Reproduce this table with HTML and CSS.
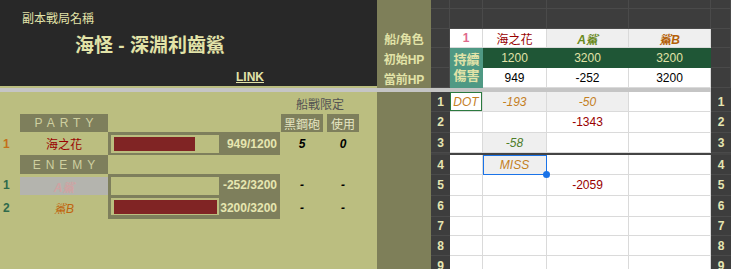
FILE: index.html
```html
<!DOCTYPE html>
<html lang="zh-Hant">
<head>
<meta charset="utf-8">
<title>副本戰局</title>
<link rel="stylesheet" href="styles.css">
</head>
<body>
<div class="sheet">
  <div class="top">
    <div class="title-panel">
      <div class="title-label">副本戰局名稱</div>
      <div class="title-main">海怪 - 深淵利齒鯊</div>
      <div class="title-link">LINK</div>
    </div>
    <div class="label-col">
      <div></div><div></div>
      <div class="lbl">船/角色</div>
      <div class="lbl">初始HP</div>
      <div class="lbl">當前HP</div>
    </div>
    <div class="top-grid">
      <div class="dk"></div><div class="dk"></div><div class="dk"></div><div class="dk"></div><div class="dk"></div><div class="dk"></div>
      <div class="dk"></div><div class="dk"></div><div class="dk"></div><div class="dk"></div><div class="dk"></div><div class="dk"></div>
      <div class="dk"></div>
      <div class="c pink">1</div>
      <div class="c dred">海之花</div>
      <div class="c gray hdr-a">A鯊</div>
      <div class="c gray hdr-b">鯊B</div>
      <div class="dk"></div>
      <div class="dk"></div>
      <div class="teal"><span>持續</span><span>傷害</span></div>
      <div class="c green">1200</div>
      <div class="c green">3200</div>
      <div class="c green">3200</div>
      <div class="dk"></div>
      <div class="dk"></div>
      <div class="c">949</div>
      <div class="c">-252</div>
      <div class="c">3200</div>
      <div class="dk"></div>
    </div>
  </div>
  <div class="divider"><div class="g"></div><div class="d"></div></div>
  <div class="bottom">
    <div class="left-panel">
      <div class="lrow r-cap"><div class="cap">船戰限定</div></div>
      <div class="lrow r-head">
        <div class="hdr sec">PARTY</div>
        <div class="hdr hb1">黑鋼砲</div>
        <div class="hdr hb2">使用</div>
      </div>
      <div class="lrow r-party">
        <div class="num orange">1</div>
        <div class="name dred">海之花</div>
        <div class="bar">
          <div class="track t18"><div class="fill" style="width:81px"></div></div>
          <div class="hp">949/1200</div>
        </div>
        <div class="val v1">5</div>
        <div class="val v2">0</div>
      </div>
      <div class="lrow r-enemy"><div class="hdr sec">ENEMY</div></div>
      <div class="lrow r-a">
        <div class="num teal-t">1</div>
        <div class="name dead">A鯊</div>
        <div class="bar">
          <div class="track t18"></div>
          <div class="hp">-252/3200</div>
        </div>
        <div class="val v1">-</div>
        <div class="val v2">-</div>
      </div>
      <div class="lrow r-b">
        <div class="num teal-t">2</div>
        <div class="name orange-i">鯊B</div>
        <div class="bar">
          <div class="track t17"><div class="fill" style="width:103px"></div></div>
          <div class="hp">3200/3200</div>
        </div>
        <div class="val v1">-</div>
        <div class="val v2">-</div>
      </div>
    </div>
    <div class="olive-col"></div>
    <div class="data-grid">
      <div class="rn">1</div><div class="c dot oi">DOT</div><div class="c gray oi">-193</div><div class="c gray oi">-50</div><div class="c"></div><div class="rn">1</div>
      <div class="rn">2</div><div class="c"></div><div class="c"></div><div class="c dred">-1343</div><div class="c"></div><div class="rn">2</div>
      <div class="rn">3</div><div class="c"></div><div class="c gray gi">-58</div><div class="c"></div><div class="c"></div><div class="rn">3</div>
      <div class="thick"></div>
      <div class="rn">4</div><div class="c"></div><div class="c gray oi sel">MISS</div><div class="c"></div><div class="c"></div><div class="rn">4</div>
      <div class="rn">5</div><div class="c"></div><div class="c"></div><div class="c dred">-2059</div><div class="c"></div><div class="rn">5</div>
      <div class="rn">6</div><div class="c"></div><div class="c"></div><div class="c"></div><div class="c"></div><div class="rn">6</div>
      <div class="rn">7</div><div class="c"></div><div class="c"></div><div class="c"></div><div class="c"></div><div class="rn">7</div>
      <div class="rn">8</div><div class="c"></div><div class="c"></div><div class="c"></div><div class="c"></div><div class="rn">8</div>
      <div class="rn">9</div><div class="c"></div><div class="c"></div><div class="c"></div><div class="c"></div><div class="rn">9</div>
    </div>
  </div>
</div>
</body>
</html>
```
FILE: styles.css
```css
* { box-sizing: border-box; margin: 0; padding: 0; }
body {
  margin: 0;
  width: 731px;
  height: 269px;
  overflow: hidden;
  font-family: "Liberation Sans", "Noto Sans CJK TC", sans-serif;
  font-size: 12px;
  background: #bbbe80;
}
.sheet { display: flex; flex-direction: column; width: 731px; }

/* top */
.top { display: flex; height: 88px; }
.title-panel {
  width: 377px; height: 88px;
  background: #282828;
  border-bottom: 2px solid #bbbe80;
  display: flex; flex-direction: column; align-items: flex-start;
  padding-top: 12px;
  color: #e2e3a8;
}
.title-label { margin-left: 22px; font-size: 12px; line-height: 14px; }
.title-main { margin-left: 75px; margin-top: 9px; font-size: 19px; line-height: 22px; font-weight: bold; }
.title-link { margin-left: 236px; margin-top: 13px; font-size: 12px; line-height: 14px; font-weight: bold; text-decoration: underline; }

.label-col {
  width: 54px; background: #7e7f59;
  display: grid; grid-template-rows: 9px 20px 19px 20px 20px;
}
.label-col .lbl { display: flex; align-items: center; justify-content: center; color: #e2e3a8; font-weight: bold; }

.top-grid {
  width: 300px;
  display: grid;
  grid-template-columns: 19px 33px 64px 82px 82px 20px;
  grid-template-rows: 9px 20px 19px 20px 20px;
}
.dk { background: #3d3d3d; border-right: 1px solid #4a4a4a; border-bottom: 1px solid #4a4a4a; }
.c {
  display: flex; align-items: center; justify-content: center;
  background: #fff; color: #000;
  border-right: 1px solid #dadada; border-bottom: 1px solid #dadada;
  white-space: nowrap;
}
.gray { background: #efefef; }
.green { background: #1f5636; color: #e2e3a8; border-color: #1f5636; }
.teal {
  grid-row: span 2;
  background: #4f9984; color: #e2e3a8; font-weight: bold; font-size: 13px;
  display: flex; flex-direction: column; align-items: center; justify-content: center;
  line-height: 16px;
}
.pink { color: #e0698c; font-weight: bold; }
.dred { color: #990000; }
.hdr-a { color: #6a8a1e; font-weight: bold; font-style: italic; }
.hdr-b { color: #b45f06; font-weight: bold; font-style: italic; }

/* divider */
.divider { display: flex; height: 4px; }
.divider .g { width: 711px; background: #c5c5c5; }
.divider .d { width: 20px; background: #3d3d3d; }

/* bottom */
.bottom { display: flex; height: 177px; }
.left-panel { width: 377px; background: #bbbe80; display: flex; flex-direction: column; }
.olive-col { width: 54px; background: #7e7f59; }

.lrow { display: grid; grid-template-columns: 20px 88px 172px 1px 42px 4px 32px 18px; }
.r-cap { height: 22px; }
.r-head { height: 18px; }
.r-party { height: 23px; }
.r-enemy { height: 19px; }
.r-a { height: 22px; }
.r-b { height: 23px; }

.cap { grid-column: 5 / 8; display: flex; align-items: center; justify-content: center; color: #545454; }
.hdr { background: #7e7f5c; color: #e6e6c2; display: flex; align-items: center; justify-content: center; }
.sec { grid-column: 2; letter-spacing: 5px; padding-left: 5px; color: #cfd0a0; }
.hb1 { grid-column: 5; }
.hb2 { grid-column: 7; }

.num { grid-column: 1; font-weight: bold; padding-left: 3px; display: flex; align-items: center; }
.orange { color: #c4701a; }
.teal-t { color: #2f6a4c; }
.name { grid-column: 2; display: flex; align-items: center; justify-content: center; }
.dead { background: #b4b4ae; color: #cfa3a3; font-weight: bold; font-style: italic; height: 18px; margin-top: 3px; }
.orange-i { color: #c0650f; font-style: italic; }

.bar { grid-column: 3; background: #7e7f5c; display: grid; grid-template-columns: 3px 108px 1fr; align-items: start; }
.track { grid-column: 2; background: #bbbe80; }
.t18 { height: 18px; margin-top: 3px; padding: 2px 2px 2px 3px; }
.t17 { height: 17px; margin-top: 2px; padding: 2px 2px 1px 3px; }
.fill { height: 100%; background: #802424; }
.hp { grid-column: 3; align-self: center; text-align: right; padding-right: 3px; font-weight: bold; color: #e6e6b0; }
.val { display: flex; align-items: center; justify-content: center; font-weight: bold; font-style: italic; color: #000; }
.v1 { grid-column: 5; }
.v2 { grid-column: 7; }

.data-grid {
  width: 300px;
  display: grid;
  grid-template-columns: 19px 33px 64px 82px 82px 20px;
  grid-template-rows: 20px 21px 20px 2px 20px 21px 21px 19px 20px 20px;
}
.rn {
  background: #3d3d3d; color: #e6e6b2; font-weight: bold;
  display: flex; align-items: center; justify-content: center;
  border-bottom: 1px solid #4a4a4a;
}
.thick { grid-column: 1 / -1; background: #444; }
.oi { color: #c4801f; font-style: italic; }
.gi { color: #4e7d2a; font-style: italic; }
.dot { box-shadow: inset 0 0 0 1px #2b7a3f; }
.sel { position: relative; z-index: 2; outline: 1px solid #1a73e8; outline-offset: -1px; border-color: #1a73e8; }
.sel::after {
  content: "";
  position: absolute; right: -4px; bottom: -4px;
  width: 7px; height: 7px; border-radius: 50%;
  background: #1a73e8;
}
```
